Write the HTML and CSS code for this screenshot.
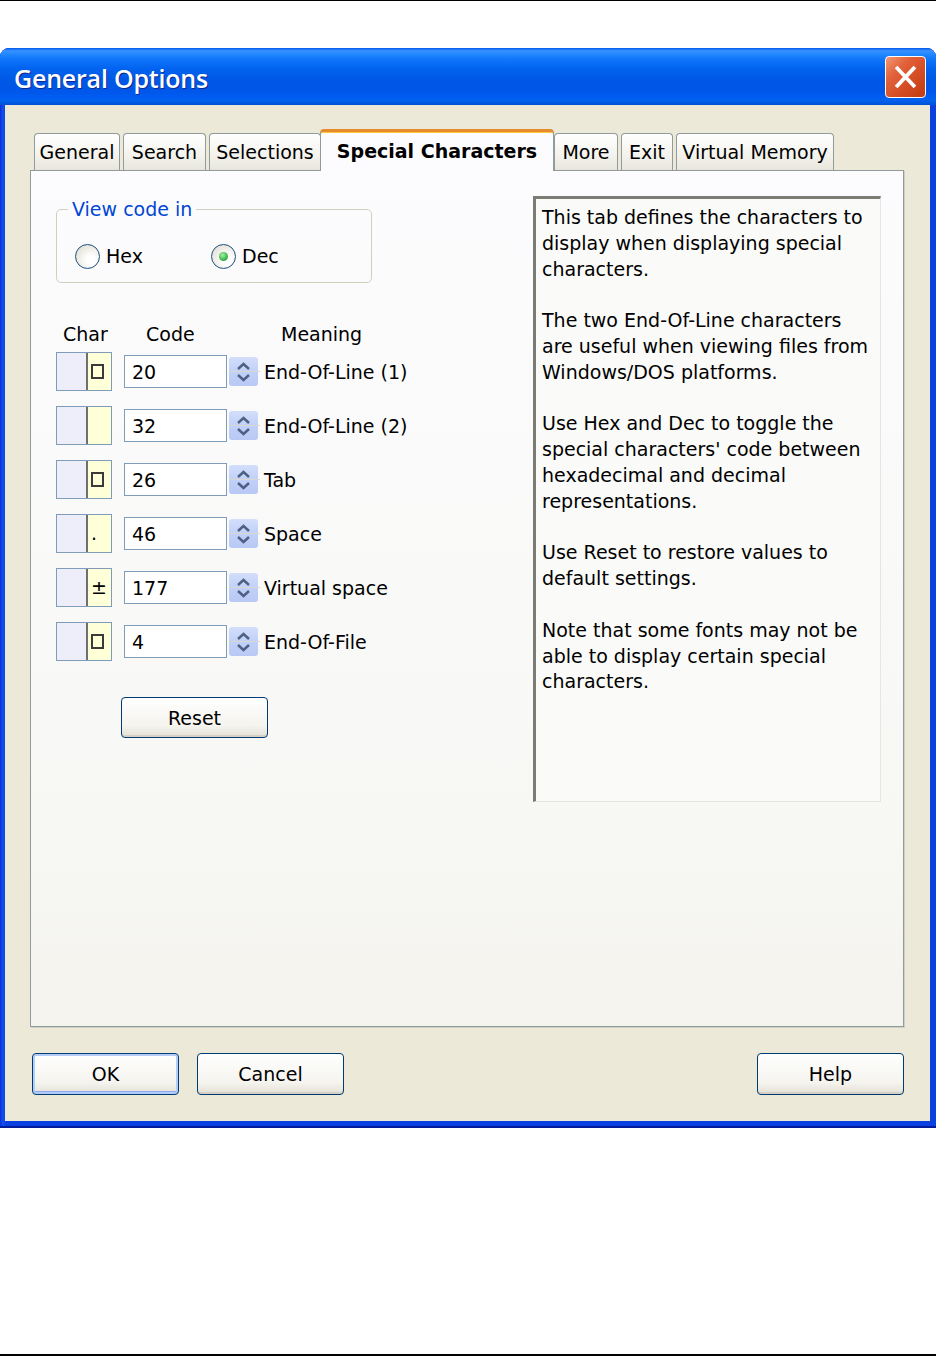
FILE: index.html
```html
<!DOCTYPE html>
<html lang="en">
<head>
    <meta charset="UTF-8">
    <meta name="viewport" content="width=device-width, initial-scale=1.0">
    <title>General Options</title>
    <link rel="stylesheet" href="styles.css">
</head>
<body>
    <div class="page-rule"></div>
    <div class="window">
        <div class="titlebar">
            <span class="title">General Options</span>
            <button class="close-btn" type="button">
                <svg width="41" height="42" viewBox="0 0 41 42">
                    <path d="M12 12 L29 30 M29 12 L12 30" stroke="#fff" stroke-width="4" stroke-linecap="square"/>
                </svg>
            </button>
        </div>
        <div class="client">
            <div class="tabs">
                <div class="tab tab-general">General</div>
                <div class="tab tab-search">Search</div>
                <div class="tab tab-selections">Selections</div>
                <div class="tab active">Special Characters</div>
                <div class="tab tab-more">More</div>
                <div class="tab tab-exit">Exit</div>
                <div class="tab tab-vm">Virtual Memory</div>
            </div>
            <div class="panel">
                <div class="left-col">
                    <fieldset class="group">
                        <legend>View code in</legend>
                        <div class="radios">
                            <label class="radio"><span class="radio-dot"></span>Hex</label>
                            <label class="radio checked"><span class="radio-dot"></span>Dec</label>
                        </div>
                    </fieldset>

                    <div class="char-head">
                        <span class="h-char">Char</span>
                        <span class="h-code">Code</span>
                        <span class="h-meaning">Meaning</span>
                    </div>

                    <div class="char-row">
                        <div class="charbox"><span class="cell"><span class="sq"></span></span></div>
                        <input class="code" type="text" value="20">
                        <div class="spin"><svg width="29" height="29" viewBox="0 0 29 29"><path d="M9 12 L14.5 7 L20 12 M9 18 L14.5 23 L20 18" fill="none" stroke="#4d6185" stroke-width="2.5"/></svg></div>
                        <span class="meaning">End-Of-Line (1)</span>
                    </div>
                    <div class="char-row">
                        <div class="charbox"><span class="cell"></span></div>
                        <input class="code" type="text" value="32">
                        <div class="spin"><svg width="29" height="29" viewBox="0 0 29 29"><path d="M9 12 L14.5 7 L20 12 M9 18 L14.5 23 L20 18" fill="none" stroke="#4d6185" stroke-width="2.5"/></svg></div>
                        <span class="meaning">End-Of-Line (2)</span>
                    </div>
                    <div class="char-row">
                        <div class="charbox"><span class="cell"><span class="sq"></span></span></div>
                        <input class="code" type="text" value="26">
                        <div class="spin"><svg width="29" height="29" viewBox="0 0 29 29"><path d="M9 12 L14.5 7 L20 12 M9 18 L14.5 23 L20 18" fill="none" stroke="#4d6185" stroke-width="2.5"/></svg></div>
                        <span class="meaning">Tab</span>
                    </div>
                    <div class="char-row">
                        <div class="charbox"><span class="cell">.</span></div>
                        <input class="code" type="text" value="46">
                        <div class="spin"><svg width="29" height="29" viewBox="0 0 29 29"><path d="M9 12 L14.5 7 L20 12 M9 18 L14.5 23 L20 18" fill="none" stroke="#4d6185" stroke-width="2.5"/></svg></div>
                        <span class="meaning">Space</span>
                    </div>
                    <div class="char-row">
                        <div class="charbox"><span class="cell">±</span></div>
                        <input class="code" type="text" value="177">
                        <div class="spin"><svg width="29" height="29" viewBox="0 0 29 29"><path d="M9 12 L14.5 7 L20 12 M9 18 L14.5 23 L20 18" fill="none" stroke="#4d6185" stroke-width="2.5"/></svg></div>
                        <span class="meaning">Virtual space</span>
                    </div>
                    <div class="char-row">
                        <div class="charbox"><span class="cell"><span class="sq"></span></span></div>
                        <input class="code" type="text" value="4">
                        <div class="spin"><svg width="29" height="29" viewBox="0 0 29 29"><path d="M9 12 L14.5 7 L20 12 M9 18 L14.5 23 L20 18" fill="none" stroke="#4d6185" stroke-width="2.5"/></svg></div>
                        <span class="meaning">End-Of-File</span>
                    </div>

                    <button class="btn reset" type="button">Reset</button>
                </div>

                <div class="help">
                    <p>This tab defines the characters to display when displaying special characters.</p>
                    <p>The two End-Of-Line characters are useful when viewing files from Windows/DOS platforms.</p>
                    <p>Use Hex and Dec to toggle the special characters' code between hexadecimal and decimal representations.</p>
                    <p>Use Reset to restore values to default settings.</p>
                    <p>Note that some fonts may not be able to display certain special characters.</p>
                </div>
            </div>

            <div class="buttons">
                <button class="btn default" type="button">OK</button>
                <button class="btn" type="button">Cancel</button>
                <button class="btn help-btn" type="button">Help</button>
            </div>
        </div>
    </div>
    <div class="page-rule bottom"></div>
</body>
</html>
```

FILE: styles.css
```css
body {
    margin: 0;
    background-color: #ffffff;
    font-family: "DejaVu Sans", sans-serif;
    font-size: 19px;
    color: #000;
}
.page-rule {
    width: 936px;
    height: 1px;
    background-color: #000;
}
.page-rule.bottom {
    margin-top: 226px;
    height: 2px;
}

/* window frame */
.window {
    margin-top: 47px;
    width: 936px;
    background: linear-gradient(to right, #0831d9, #1450ec 3px, #0a3fe0 6px);
    background-color: #0840e0;
    border-radius: 9px 9px 0 0;
    border-bottom: 2px solid #001c9c;
    padding-bottom: 5px;
}
.titlebar {
    height: 57px;
    display: flex;
    align-items: center;
    justify-content: space-between;
    padding: 0 10px 0 14px;
    border-radius: 9px 9px 0 0;
    background: linear-gradient(to bottom, #0058ee 0%, #3a93ff 5%, #2489ff 10%, #0f76fa 20%, #0264f0 35%, #0058e6 55%, #0056e8 75%, #005cf2 85%, #0262ee 92%, #0051d4 100%);
}
.title {
    font-family: "Open Sans", "DejaVu Sans", sans-serif;
    font-weight: 600;
    font-size: 25px;
    color: #fff;
    text-shadow: 1px 1px 0 #0b2a8a;
    letter-spacing: -0.2px;
    margin-top: 3px;
}
.close-btn {
    width: 41px;
    height: 42px;
    padding: 0;
    border: 1px solid #fff;
    border-radius: 4px;
    background: linear-gradient(135deg, #f29a78 0%, #e3633c 30%, #d34b22 65%, #c03a12 100%);
    display: flex;
    align-items: center;
    justify-content: center;
    margin-top: 1px;
}
.close-btn svg {
    display: block;
}

.client {
    margin: 0 6px 0 5px;
    background-color: #ece9d8;
    padding: 24px 26px 26px 25px;
}

/* tabs */
.tabs {
    display: flex;
    align-items: flex-end;
    padding-left: 4px;
    position: relative;
    z-index: 1;
}
.tab {
    box-sizing: border-box;
    height: 37px;
    line-height: 37px;
    padding: 0;
    text-align: center;
    margin-right: 3px;
    border: 1px solid #919b9c;
    border-bottom: none;
    border-radius: 4px 4px 0 0;
    background: linear-gradient(to bottom, #ffffff, #f3f2ec 60%, #e8e6dc);
    white-space: nowrap;
}
.tab-general { width: 86px; }
.tab-search { width: 83px; }
.tab-selections { width: 112px; }
.tab-more { width: 64px; }
.tab-exit { width: 52px; }
.tab-vm { width: 158px; }
.tab.active {
    width: 234px;
    height: 42px;
    line-height: 38px;
    margin: 0 1px -1px -4px;
    font-weight: bold;
    background: #fcfcfe;
    border-top: 3px solid #f5a623;
    border-color: #e68b2c #919b9c #919b9c #919b9c;
    box-shadow: inset 0 1px 0 #ffc83c;
}
.tab.active + .tab {
    margin-left: -1px;
}

.panel {
    height: 855px;
    border: 1px solid #919b9c;
    background: linear-gradient(to bottom, #fcfcfe, #f7f7f4 80%, #f4f3ee);
    display: flex;
    box-shadow: 1px 1px 0 #d0cfc4;
}
.left-col {
    width: 477px;
    padding-left: 25px;
}

/* view code in group */
.group {
    margin: 27px 0 0 0;
    width: 316px;
    box-sizing: border-box;
    border: 1px solid #d0d0bf;
    border-radius: 5px;
    padding: 24px 0 14px 18px;
}
.group legend {
    color: #0046d5;
    padding: 0 4px;
    margin-left: -7px;
    line-height: 22px;
}
.radios {
    display: flex;
}
.radio {
    display: flex;
    align-items: center;
    gap: 6px;
    width: 136px;
    height: 24px;
}
.radio-dot {
    width: 23px;
    height: 23px;
    border: 1px solid #1c5180;
    border-radius: 50%;
    background: radial-gradient(circle at 65% 65%, #ffffff 20%, #e8e6dc 70%, #d6d3c6);
    display: flex;
    align-items: center;
    justify-content: center;
}
.radio.checked .radio-dot::after {
    content: "";
    width: 9px;
    height: 9px;
    border-radius: 50%;
    background: radial-gradient(circle at 40% 35%, #a8f0a0, #3cb54a 60%, #1f8a2c);
}

/* special characters list */
.char-head {
    display: flex;
    margin-top: 39px;
    height: 24px;
    line-height: 24px;
}
.h-char {
    width: 83px;
    padding-left: 7px;
}
.h-code {
    width: 135px;
}
.char-row {
    display: flex;
    align-items: center;
    margin-top: 6px;
    height: 39px;
}
.char-row + .char-row {
    margin-top: 15px;
}
.charbox {
    width: 56px;
    height: 39px;
    box-sizing: border-box;
    border: 1px solid #7f9db9;
    background-color: #eeeefb;
    padding-left: 29px;
    display: flex;
}
.cell {
    flex: 1;
    background-color: #ffffd8;
    border-left: 2px solid #6f6f6f;
    display: flex;
    align-items: center;
    padding-left: 3px;
    font-size: 19px;
    line-height: 1;
}
.sq {
    width: 9px;
    height: 11px;
    border: 2px solid #3a3a3a;
}
.code {
    margin-left: 12px;
    width: 103px;
    height: 33px;
    box-sizing: border-box;
    border: 1px solid #7f9db9;
    padding: 0 7px;
    font: inherit;
    color: #000;
    background: #fff;
}
.spin {
    margin-left: 2px;
    width: 29px;
    height: 29px;
    border-radius: 3px;
    background: linear-gradient(to bottom, #d3defb, #c1d0f7 50%, #b9c9f5);
    position: relative;
}
.spin svg {
    display: block;
}
.spin::after {
    content: "";
    position: absolute;
    left: 0;
    top: 14px;
    width: 31px;
    height: 1px;
    background-color: #d8d8d0;
}
.meaning {
    margin-left: 6px;
}

/* buttons */
.btn {
    font: inherit;
    color: #000;
    width: 147px;
    height: 42px;
    border: 1px solid #003c74;
    border-radius: 4px;
    background: linear-gradient(to bottom, #ffffff, #f5f4ef 70%, #e3e1d6);
    box-shadow: inset 0 -2px 0 #d6d0c5;
}
.btn.reset {
    margin: 36px 0 0 65px;
    height: 41px;
}
.btn.default {
    box-shadow: inset 0 0 0 2px #b4ccf8, inset 0 -3px 0 #91a9ee;
}

.help {
    margin-top: 25px;
    width: 348px;
    height: 606px;
    box-sizing: border-box;
    border-style: solid;
    border-width: 3px 1px 1px 3px;
    border-color: #7d7c74 #e6e5de #e6e5de #7d7c74;
    background-color: #fafaf8;
    padding: 6px 6px;
    line-height: 25.8px;
}
.help p {
    margin: 0 0 25.8px 0;
}

.buttons {
    display: flex;
    gap: 18px;
    margin-top: 26px;
    padding-left: 2px;
}
.help-btn {
    margin-left: auto;
}
```
